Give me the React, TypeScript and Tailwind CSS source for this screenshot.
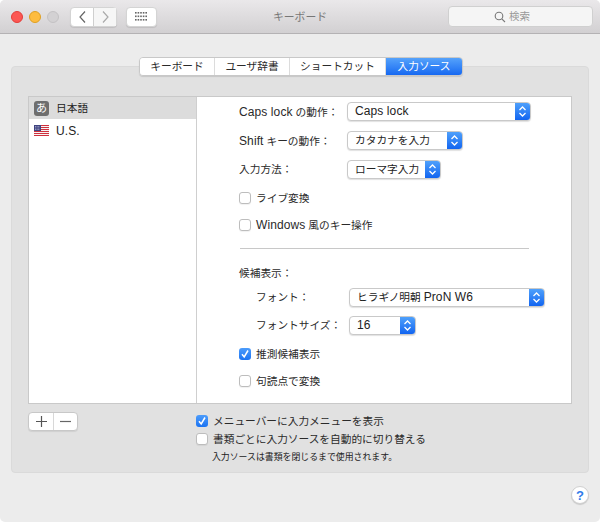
import { type ReactNode } from "react";

const font = "[font-family:'Liberation_Sans','Noto_Sans_CJK_JP',sans-serif]";

// latin runs sit larger than the kana next to them
function L({ children }: { children: ReactNode }) {
  return <span className="text-[12px] tracking-[0.1px]">{children}</span>;
}

function Light({ color }: { color: string }) {
  return <span className={`h-3 w-3 shrink-0 rounded-full border ${color}`} />;
}

function Chevrons() {
  return (
    <svg width="9" height="13" viewBox="0 0 9 13" fill="none" stroke="white" strokeWidth="1.3">
      <path d="M1.5 5 4.5 2 7.5 5" />
      <path d="M1.5 8 4.5 11 7.5 8" />
    </svg>
  );
}

function Select({ label, width }: { label: ReactNode; width: string }) {
  return (
    <div className={`flex h-[19px] ${width} items-stretch overflow-hidden rounded-[4px] border border-[#c9c9c9] bg-white shadow-[0_1px_1px_rgba(0,0,0,0.12)]`}>
      <span className="flex-1 whitespace-nowrap pl-[7px] text-[10.7px] leading-[17px] text-[#222]">{label}</span>
      <span className="flex w-[15px] items-center justify-center bg-gradient-to-b from-[#4fa0fb] to-[#1164f0]">
        <Chevrons />
      </span>
    </div>
  );
}

function Check({ checked }: { checked?: boolean }) {
  if (checked) {
    return (
      <span className="flex h-[12px] w-[12px] shrink-0 items-center justify-center rounded-[3px] bg-gradient-to-b from-[#4c9cfb] to-[#1a73f2]">
        <svg width="10" height="10" viewBox="0 0 10 10" fill="none" stroke="white" strokeWidth="1.5">
          <path d="M2 5.2 4.2 8 8 1.5" />
        </svg>
      </span>
    );
  }
  return <span className="h-[12px] w-[12px] shrink-0 rounded-[3px] border border-[#bdbdbd] bg-white shadow-[0_1px_1px_rgba(0,0,0,0.06)]" />;
}

function CheckRow({ checked, className, children }: { checked?: boolean; className?: string; children: ReactNode }) {
  return (
    <div className={`flex items-center gap-[5px] text-[10.7px] leading-[14px] text-[#2a2a2a] ${className ?? ""}`}>
      <Check checked={checked} />
      <span>{children}</span>
    </div>
  );
}

function FormRow({ label, labelWidth, className, children }: { label: ReactNode; labelWidth: string; className?: string; children: ReactNode }) {
  return (
    <div className={`flex items-center ${className ?? ""}`}>
      <span className={`${labelWidth} shrink-0 whitespace-nowrap text-[10.7px] text-[#2a2a2a]`}>{label}</span>
      {children}
    </div>
  );
}

function Flag() {
  return (
    <svg width="15" height="11" viewBox="0 0 15 11" className="shrink-0">
      <rect width="15" height="11" fill="#f6f2f2" />
      <path d="M0 .5h15M0 2.5h15M0 4.5h15M0 6.5h15M0 8.5h15M0 10.5h15" stroke="#cf2f3c" strokeWidth="1" />
      <rect width="7" height="6" fill="#3f4480" />
      <path d="M1 1.5h5M1 3h5M1 4.5h5" stroke="#b8bbd8" strokeWidth="0.7" strokeDasharray="1 0.6" />
    </svg>
  );
}

function Tab({ label, active, width }: { label: string; active?: boolean; width: string }) {
  return (
    <span
      className={`flex h-full ${width} items-center justify-center text-[10.7px] ${
        active ? "bg-gradient-to-b from-[#55a2fb] to-[#1668f1] text-white" : "border-r border-[#dcdcdc] bg-white text-[#2a2a2a]"
      }`}
    >
      {label}
    </span>
  );
}

export default function App() {
  return (
    <div className={`${font} relative flex h-[522px] w-[600px] flex-col overflow-hidden rounded-[5px] bg-[#ececec]`}>
      {/* Title bar */}
      <header className="relative flex h-[34px] shrink-0 items-center border-b border-[#b4b2b4] bg-gradient-to-b from-[#eae8ea] to-[#d2d0d2] pl-[11px] pr-[7px]">
        <div className="flex gap-[6px]">
          <Light color="border-[#e33e3a] bg-[#fc5753]" />
          <Light color="border-[#dfa023] bg-[#fdbc40]" />
          <Light color="border-[#c4c2c4] bg-[#d3d1d3]" />
        </div>
        <div className="ml-[11px] flex h-[20px] w-[47px] rounded-[4px] border border-[#d4d4d4] bg-white text-[#6a6a6a] shadow-[0_1px_1px_rgba(0,0,0,0.1)]">
          <span className="flex w-[23px] items-center justify-center border-r border-[#cfcfcf]">
            <svg width="9" height="14" viewBox="0 0 9 14" fill="none" stroke="#666" strokeWidth="1.2"><path d="M7 1.5 2 7l5 5.5" /></svg>
          </span>
          <span className="flex flex-1 items-center justify-center bg-[#f6f6f6]">
            <svg width="9" height="14" viewBox="0 0 9 14" fill="none" stroke="#aaa" strokeWidth="1.2"><path d="M2 1.5 7 7l-5 5.5" /></svg>
          </span>
        </div>
        <div className="ml-[9px] flex h-[20px] w-[31px] items-center justify-center rounded-[4px] border border-[#d4d4d4] bg-white shadow-[0_1px_1px_rgba(0,0,0,0.1)]">
          <svg width="13" height="9" viewBox="0 0 13 9" fill="#666">
            {[0, 3.5, 7].map((y) =>
              [0, 2.6, 5.2, 7.8, 10.4].map((x) => <rect key={`${x}-${y}`} x={x} y={y} width="1.6" height="1.6" />),
            )}
          </svg>
        </div>
        <span className="absolute left-0 right-0 mt-[2px] text-center text-[10.8px] text-[#777]">キーボード</span>
        <div className="ml-auto flex h-[21px] w-[145px] items-center justify-center gap-[3px] rounded-[4px] border border-[#d0d0d0] bg-[#f5f5f5] pr-[17px] text-[10.5px] text-[#999]">
          <svg width="12" height="12" viewBox="0 0 12 12" fill="none" stroke="#777" strokeWidth="1.1">
            <circle cx="5" cy="5" r="3.8" />
            <path d="M7.8 7.8 11 11" />
          </svg>
          検索
        </div>
      </header>

      {/* Panel */}
      <main className="relative mx-[11px] mt-[32px] h-[407px] rounded-[4px] border border-[#dadada] bg-[#e1e1e1] px-[16px] pt-[29px]">
        <div className="absolute left-[127px] top-[-10px] flex h-[19px] w-[324px] overflow-hidden rounded-[4px] border border-[#c8c8c8] shadow-[0_1px_1px_rgba(0,0,0,0.12)]">
          <Tab label="キーボード" width="w-[75px]" />
          <Tab label="ユーザ辞書" width="w-[75px]" />
          <Tab label="ショートカット" width="w-[96px]" />
          <Tab label="入力ソース" active width="flex-1" />
        </div>

        <div className="flex h-[308px] w-[544px] border border-[#c9c9c9] bg-white">
          {/* Source list */}
          <aside className="w-[168px] shrink-0 border-r border-[#cfcfcf]">
            <div className="flex h-[22px] items-center gap-[7px] bg-[#dcdcdc] pl-[5px] text-[10.7px] text-[#222]">
              <span className="flex h-[15px] w-[15px] items-center justify-center rounded-[3px] bg-[#6e6e6e] text-[11px] leading-none text-white">あ</span>
              日本語
            </div>
            <div className="flex h-[23px] items-center gap-[7px] pl-[5px] text-[#222]">
              <Flag />
              <L>U.S.</L>
            </div>
          </aside>

          {/* Options */}
          <section className="flex-1 pl-[42px] pt-[5px]">
            <FormRow label={<><L>Caps lock</L> の動作：</>} labelWidth="w-[108px]">
              <Select label={<L>Caps lock</L>} width="w-[184px]" />
            </FormRow>
            <FormRow label={<><L>Shift</L> キーの動作：</>} labelWidth="w-[108px]" className="mt-[10px]">
              <Select label="カタカナを入力" width="w-[116px]" />
            </FormRow>
            <FormRow label="入力方法：" labelWidth="w-[108px]" className="mt-[10px]">
              <Select label="ローマ字入力" width="w-[94px]" />
            </FormRow>
            <CheckRow className="mt-[12px]">ライブ変換</CheckRow>
            <CheckRow className="mt-[13px]"><L>Windows</L> 風のキー操作</CheckRow>
            <div className="ml-[1px] mt-[16px] h-px w-[289px] bg-[#c8c8c8]" />
            <p className="mt-[17px] text-[10.7px] leading-[14px] text-[#2a2a2a]">候補表示：</p>
            <FormRow label="フォント：" labelWidth="w-[93px]" className="ml-[17px] mt-[8px]">
              <Select label={<>ヒラギノ明朝 <L>ProN W6</L></>} width="w-[196px]" />
            </FormRow>
            <FormRow label="フォントサイズ：" labelWidth="w-[93px]" className="ml-[17px] mt-[9px]">
              <Select label={<L>16</L>} width="w-[67px]" />
            </FormRow>
            <CheckRow checked className="mt-[12px]">推測候補表示</CheckRow>
            <CheckRow className="mt-[13px]">句読点で変換</CheckRow>
          </section>
        </div>

        {/* Below the list */}
        <div className="flex pt-[8px]">
          <div className="flex h-[19px] w-[50px] rounded-[4px] border border-[#c8c8c8] bg-white text-[#555] shadow-[0_1px_1px_rgba(0,0,0,0.08)]">
            <span className="flex w-[25px] items-center justify-center border-r border-[#d8d8d8]">
              <svg width="11" height="11" viewBox="0 0 11 11" stroke="#555" strokeWidth="1.2"><path d="M5.5 0v11M0 5.5h11" /></svg>
            </span>
            <span className="flex flex-1 items-center justify-center">
              <svg width="11" height="11" viewBox="0 0 11 11" stroke="#666" strokeWidth="1.2"><path d="M0 5.5h11" /></svg>
            </span>
          </div>
          <div className="ml-[118px] pt-[2px]">
            <CheckRow checked>メニューバーに入力メニューを表示</CheckRow>
            <CheckRow className="mt-[4px]">書類ごとに入力ソースを自動的に切り替える</CheckRow>
            <p className="ml-[16px] mt-[5px] text-[8.9px] leading-[12px] text-[#222]">入力ソースは書類を閉じるまで使用されます。</p>
          </div>
        </div>
      </main>

      <div className="flex justify-end pr-[11px] pt-[13px]">
        <span className="flex h-[18px] w-[18px] items-center justify-center rounded-full border border-[#d0d0d0] bg-white text-[13px] font-bold leading-none text-[#2f7bea] shadow-[0_1px_1px_rgba(0,0,0,0.15)]">?</span>
      </div>
    </div>
  );
}
